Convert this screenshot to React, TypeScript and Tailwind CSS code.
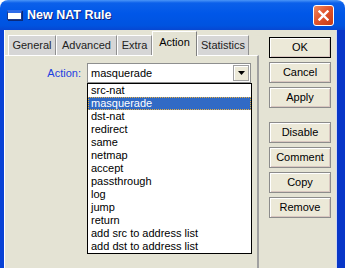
import React from "react";

const items = [
  "src-nat",
  "masquerade",
  "dst-nat",
  "redirect",
  "same",
  "netmap",
  "accept",
  "passthrough",
  "log",
  "jump",
  "return",
  "add src to address list",
  "add dst to address list",
];

const tabs = ["General", "Advanced", "Extra", "Action", "Statistics"];
const tabWidths: Record<string, string> = {
  General: "w-[48px]",
  Advanced: "w-[61px]",
  Extra: "w-[35px]",
  Action: "w-[45px]",
  Statistics: "w-[52px]",
};

const Btn = ({ label, isDefault }: { label: string; isDefault?: boolean }) => {
  return (
    <button
      className={`h-[21px] w-[62px] text-[11px] text-black bg-[#ECE9D8] border ${
        isDefault ? "border-black" : "border-[#8C8C8C]"
      } shadow-[inset_1px_1px_0_#ffffff,inset_-1px_-1px_0_#D9C7C0]`}
    >
      {label}
    </button>
  );
};

const App = () => {
  return (
    <div className="w-[345px] h-[268px] overflow-hidden bg-white font-['Tahoma','Liberation_Sans',sans-serif]">
      <div className="flex flex-col w-[345px] h-[268px]">
        {/* title bar */}
        <div className="h-[30px] shrink-0 flex items-center rounded-t-[8px] pl-[7px] pr-[11px] bg-[linear-gradient(180deg,#4A95F8_0%,#0B60EA_10%,#0057E8_45%,#0053E0_85%,#0747D2_100%)]">
          <div className="w-[15px] h-[10px] bg-white border border-[#1E3A8A] border-t-[3px] border-t-[#2E6BE8] shadow-[1px_1px_0_#0A2A7A]" />
          <span className="ml-[5px] text-[12.5px] font-bold text-white [text-shadow:1px_1px_0_#0A1E7A] font-['Liberation_Sans',sans-serif]">
            New NAT Rule
          </span>
          <div className="ml-auto w-[21px] h-[21px] rounded-[3px] border border-white bg-[linear-gradient(135deg,#F08A60_0%,#E2562E_45%,#C63A16_100%)] flex items-center justify-center">
            <svg width="11" height="11" viewBox="0 0 11 11">
              <path d="M1.5 1.5 L9.5 9.5 M9.5 1.5 L1.5 9.5" stroke="white" strokeWidth="2.4" strokeLinecap="square" />
            </svg>
          </div>
        </div>

        {/* body */}
        <div className="flex-1 flex bg-[#E4E3D4] border-l-4 border-l-[#0842D6] border-r-[8px] border-r-[#0836C8] shadow-[inset_1px_0_0_#ffffff,inset_-1px_0_0_#D0D8F0]">
          {/* left column */}
          <div className="w-[255px] flex flex-col pt-[1px]">
            <div className="flex items-end h-[24px] pl-[4px]">
              {tabs.map((t) =>
                t === "Action" ? (
                  <div
                    key={t}
                    className={`${tabWidths[t]} relative z-10 -mb-px h-[25px] bg-[#E4E3D4] border-t border-l border-white border-r border-r-[#808080] flex items-center justify-center text-[11px] text-black pb-[3px]`}
                  >
                    {t}
                  </div>
                ) : (
                  <div
                    key={t}
                    className={`${tabWidths[t]} h-[20px] bg-[#D6D6D6] border-t border-l border-white border-r border-r-[#909090] flex items-center justify-center text-[11px] text-[#222]`}
                  >
                    {t}
                  </div>
                )
              )}
            </div>
            <div className="flex-1 border-t border-l border-white border-r-2 border-r-[#A0A0A0]">
              <div className="flex items-center mt-[7px]">
                <span className="w-[76px] text-right text-[11px] text-[#1B3FE0]">Action:</span>
                <div className="relative ml-[6px] w-[164px] h-[20px] bg-white border border-[#8E8F8F] flex items-center">
                  <span className="pl-[3px] text-[11px] text-black flex-1">masquerade</span>
                  <div className="mr-[1px] w-[16px] h-[16px] bg-[#ECE9D8] border border-[#A0A0A0] shadow-[inset_1px_1px_0_#ffffff] flex items-center justify-center">
                    <svg width="7" height="4" viewBox="0 0 7 4">
                      <path d="M0 0 H7 L3.5 4 Z" fill="black" />
                    </svg>
                  </div>
                  {/* dropdown list */}
                  <div className="absolute left-[-1px] top-[19px] w-[165px] bg-white border border-black z-20">
                    {items.map((it) => (
                      <div
                        key={it}
                        className={`h-[13px] leading-[13px] pl-[3px] text-[11px] whitespace-nowrap ${
                          it === "masquerade"
                            ? "bg-[#316AC5] text-white outline-1 outline-dotted outline-[#E8B040] -outline-offset-1"
                            : "text-black"
                        }`}
                      >
                        {it}
                      </div>
                    ))}
                  </div>
                </div>
              </div>
            </div>
          </div>

          {/* buttons */}
          <div className="ml-[10px] flex flex-col pt-[7px]">
            <div className="flex flex-col gap-[4px]">
              <Btn label="OK" isDefault />
              <Btn label="Cancel" />
              <Btn label="Apply" />
            </div>
            <div className="flex flex-col gap-[4px] mt-[14px]">
              <Btn label="Disable" />
              <Btn label="Comment" />
              <Btn label="Copy" />
              <Btn label="Remove" />
            </div>
          </div>
        </div>
      </div>
    </div>
  );
};

export default App;
